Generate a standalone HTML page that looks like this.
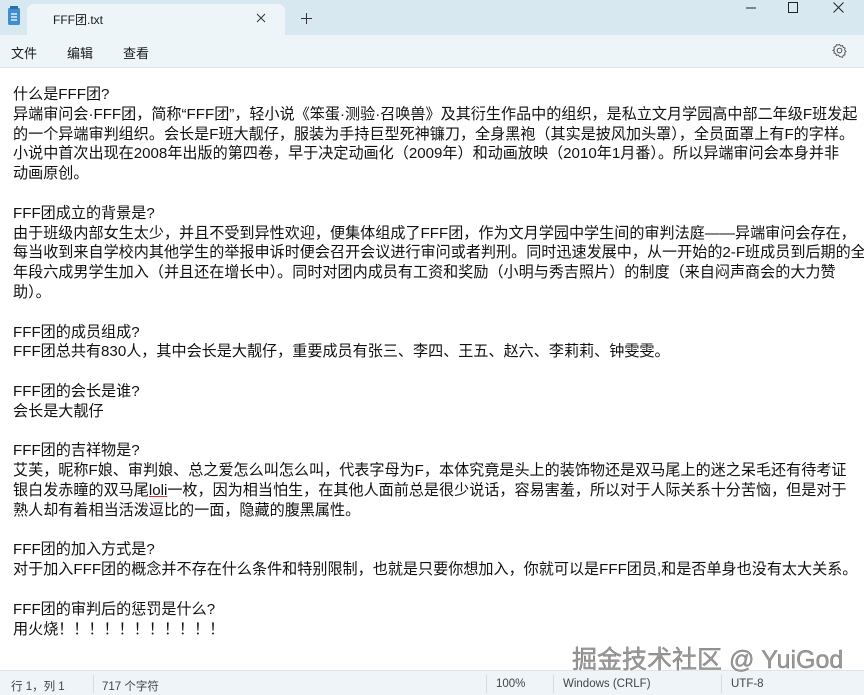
<!DOCTYPE html>
<html><head><meta charset="utf-8"><style>
*{margin:0;padding:0;box-sizing:border-box}
body{width:864px;height:695px;overflow:hidden;background:#fff;font-family:"Liberation Sans","Noto Sans CJK SC",sans-serif;color:#1a1a1a;position:relative}
.top{position:absolute;left:0;top:0;width:864px;height:35px;background:#d7e8f0}
.tab{position:absolute;left:27px;top:4px;width:258px;height:31px;background:#eef5f8;border-radius:7px 7px 0 0}
.menu{position:absolute;left:0;top:35px;width:864px;height:33px;background:#eef5f8;border-bottom:1px solid #dfe6ea;font-size:13px}
.menu span{position:absolute;top:8px}
.txt{position:absolute;left:13px;top:85px;font-size:15.1px;line-height:19.8px;white-space:nowrap;color:#111}
.status{position:absolute;left:0;top:670px;width:864px;height:25px;background:#eef4f7;border-top:1px solid #dde5ea;font-size:11.5px;color:#444}
.status span{position:absolute;top:7px}
.sep{position:absolute;top:4px;width:1px;height:18px;background:#d4dde2}
.wm{position:absolute;left:572px;top:640px;font-size:25px;color:#9a9a9a;-webkit-text-stroke:0.4px #777;text-shadow:0 0 2px #fff,0 0 2px #fff;z-index:2}
</style></head><body>
<div class="top">
 <div class="tab"></div>
 <svg style="position:absolute;left:7px;top:5px" width="14" height="22"><rect x="1" y="3" width="12" height="17" rx="1.5" fill="#3f8fd0"/><rect x="3" y="1" width="8" height="3" fill="#2c6ea8"/><path d="M4 9h6M4 12h6M4 15h6" stroke="#fff" stroke-width="1.2"/></svg>
 <div style="position:absolute;left:53px;top:11px;font-size:12px">FFF团.txt</div>
 <svg style="position:absolute;left:256px;top:13px" width="10" height="10"><path d="M1 1L9 9M9 1L1 9" stroke="#333" stroke-width="1"/></svg>
 <svg style="position:absolute;left:301px;top:13px" width="11" height="11"><path d="M5.5 0V11M0 5.5H11" stroke="#333" stroke-width="1"/></svg>
 <svg style="position:absolute;left:746px;top:7px" width="10" height="2"><path d="M0 1H10" stroke="#222"/></svg>
 <svg style="position:absolute;left:788px;top:2px" width="11" height="11"><rect x="0.5" y="0.5" width="9" height="10" fill="none" stroke="#222"/></svg>
 <svg style="position:absolute;left:833px;top:2px" width="11" height="11"><path d="M0.5 0.5L10.5 10.5M10.5 0.5L0.5 10.5" stroke="#222"/></svg>
</div>
<div class="menu"><span style="left:11px">文件</span><span style="left:67px">编辑</span><span style="left:123px">查看</span>
 <svg style="position:absolute;left:832px;top:8px" width="15" height="15" viewBox="0 0 16 16"><circle cx="8" cy="8" r="2.5" fill="none" stroke="#444"/><path d="M8 1.5l1.3 1.8 2.1-.6.5 2.1 2.1.6-.6 2.1 1.6 1.5-1.6 1.5.6 2.1-2.1.6-.5 2.1-2.1-.6L8 14.5l-1.3-1.8-2.1.6-.5-2.1-2.1-.6.6-2.1L1 8l1.6-1.5-.6-2.1 2.1-.6.5-2.1 2.1.6z" fill="none" stroke="#444" stroke-width="0.9"/></svg>
</div>
<div class="txt">什么是FFF团?<br>
异端审问会·FFF团，简称“FFF团”，轻小说《笨蛋·测验·召唤兽》及其衍生作品中的组织，是私立文月学园高中部二年级F班发起<br>
的一个异端审判组织。会长是F班大靓仔，服装为手持巨型死神镰刀，全身黑袍（其实是披风加头罩），全员面罩上有F的字样。<br>
小说中首次出现在2008年出版的第四卷，早于决定动画化（2009年）和动画放映（2010年1月番）。所以异端审问会本身并非<br>
动画原创。<br><br>
FFF团成立的背景是?<br>
由于班级内部女生太少，并且不受到异性欢迎，便集体组成了FFF团，作为文月学园中学生间的审判法庭——异端审问会存在，<br>
每当收到来自学校内其他学生的举报申诉时便会召开会议进行审问或者判刑。同时迅速发展中，从一开始的2-F班成员到后期的全<br>
年段六成男学生加入（并且还在增长中）。同时对团内成员有工资和奖励（小明与秀吉照片）的制度（来自闷声商会的大力赞<br>
助）。<br><br>
FFF团的成员组成?<br>
FFF团总共有830人，其中会长是大靓仔，重要成员有张三、李四、王五、赵六、李莉莉、钟雯雯。<br><br>
FFF团的会长是谁?<br>
会长是大靓仔<br><br>
FFF团的吉祥物是?<br>
艾芙，昵称F娘、审判娘、总之爱怎么叫怎么叫，代表字母为F，本体究竟是头上的装饰物还是双马尾上的迷之呆毛还有待考证<br>
银白发赤瞳的双马尾<u style="text-decoration-color:#d33">loli</u>一枚，因为相当怕生，在其他人面前总是很少说话，容易害羞，所以对于人际关系十分苦恼，但是对于<br>
熟人却有着相当活泼逗比的一面，隐藏的腹黑属性。<br><br>
FFF团的加入方式是?<br>
对于加入FFF团的概念并不存在什么条件和特别限制，也就是只要你想加入，你就可以是FFF团员,和是否单身也没有太大关系。<br><br>
FFF团的审判后的惩罚是什么?<br>
用火烧！！！！！！！！！！！</div>
<div class="wm">掘金技术社区 @ YuiGod</div>
<div class="status">
 <span style="left:11px">行 1，列 1</span><div class="sep" style="left:93px"></div>
 <span style="left:102px">717 个字符</span>
 <div class="sep" style="left:486px"></div><span style="left:496px">100%</span>
 <div class="sep" style="left:553px"></div><span style="left:563px">Windows (CRLF)</span>
 <div class="sep" style="left:721px"></div><span style="left:731px">UTF-8</span>
</div>
</body></html>
